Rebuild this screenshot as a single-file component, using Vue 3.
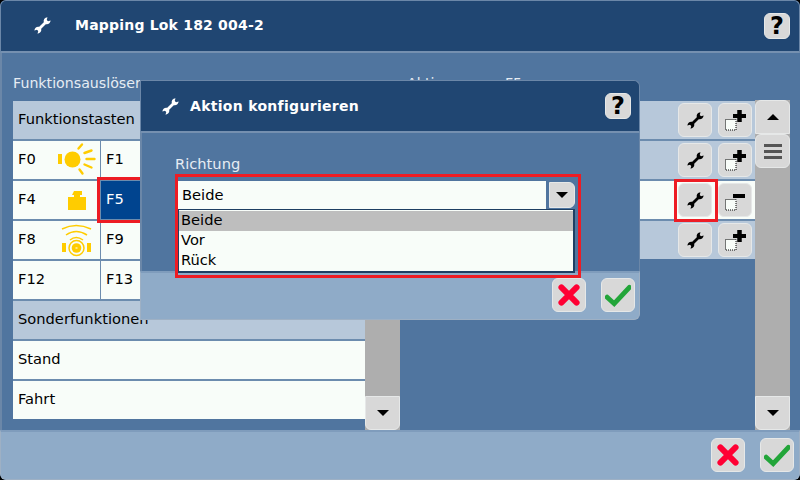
<template>
  <div class="window">
    <header class="head main-head">
      <svg class="head-wrench" viewBox="0 0 24 24"><use href="#wrench" /></svg>
      <h1>Mapping Lok 182 004-2</h1>
      <button class="btn help">?</button>
    </header>

    <main class="body">
      <section class="left">
        <div class="caption">Funktionsauslöser</div>
        <div class="table">
          <div class="row group">Funktionstasten</div>
          <div v-for="(row, i) in keys" :key="i" class="row keys">
            <div v-for="k in row" :key="k.name" class="key" :class="{ active: k.name === 'F5' }">
              <span>{{ k.name }}</span>
              <svg v-if="k.icon === 'light'" class="fn-icon" viewBox="0 0 40 36">
                <rect x="2" y="12" width="4" height="10" fill="#fc0" />
                <circle cx="16.500" cy="17.500" r="8" fill="#fc0" />
                <path class="rays" d="M22.500 6.500L26 2.500M28.500 11L35.500 8.500M30.500 17H38.500M28.500 22.500L35.500 25.500M23.500 27.500L26.500 31.500" />
              </svg>
              <svg v-if="k.icon === 'weight'" class="fn-icon" viewBox="0 0 40 36">
                <path d="M18 9h8v4h-2v2h6v13H12V15h6v-2h-2z" fill="#fc0" />
              </svg>
              <svg v-if="k.icon === 'sound'" class="fn-icon" viewBox="0 0 40 36">
                <g fill="none" stroke="#fc0" stroke-width="1.500">
                  <path d="M6 7Q20 0 35 7M10 13Q20 6 31 13M14 18Q20 13 27 18" />
                  <circle cx="20.500" cy="26" r="7.500" />
                </g>
                <circle cx="20.500" cy="26" r="4.800" fill="#fc0" />
                <rect x="19.500" y="25.500" width="2" height="1" fill="#fff" />
                <path d="M6 21h4v9H6zM31 21h4v9h-4z" fill="#fc0" />
              </svg>
            </div>
            <div class="key rest"></div>
          </div>
          <div class="row group">Sonderfunktionen</div>
          <div class="row plain">Stand</div>
          <div class="row plain">Fahrt</div>
        </div>
        <div class="scroll narrow">
          <button class="btn arrow end"><i class="tri down"></i></button>
        </div>
      </section>

      <section class="right">
        <div class="caption">Aktionen von F5</div>
        <div class="actions">
          <div v-for="(a, i) in actions" :key="i" class="row action" :class="{ on: a === 'minus' }">
            <span class="tool-wrap" :class="{ marked: a === 'minus' }">
              <button class="btn tool">
                <svg class="small-wrench" viewBox="0 0 24 24"><use href="#wrench" /></svg>
              </button>
            </span>
            <button class="btn tool">
              <svg viewBox="0 0 24 24">
                <rect x="2.500" y="11.500" width="10.500" height="10.500" fill="#f8fdf9" stroke="#000" stroke-dasharray="1 1" />
                <path v-if="a === 'plus'" d="M14.250 2h4.500v4H23v4h-4.250v4h-4.500v-4H10V6h4.250z" />
                <path v-else d="M10 6h12v4H10z" />
              </svg>
            </button>
          </div>
        </div>
        <div class="scroll">
          <button class="btn arrow top"><i class="tri up"></i></button>
          <button class="btn arrow grip"><i></i><i></i><i></i></button>
          <button class="btn arrow end"><i class="tri down"></i></button>
        </div>
      </section>
    </main>

    <footer class="foot main-foot">
      <button class="btn big">
        <svg viewBox="0 0 24 24"><path d="M5 5L19 19M19 5L5 19" class="x" /></svg>
      </button>
      <button class="btn big">
        <svg viewBox="0 0 24 24"><path d="M2 14L8.500 20L22.500 5" class="ok" /></svg>
      </button>
    </footer>

    <div class="f5-mark"></div>

    <div class="dialog">
      <header class="head dlg-head">
        <svg class="head-wrench" viewBox="0 0 24 24"><use href="#wrench" /></svg>
        <h2>Aktion konfigurieren</h2>
        <button class="btn help">?</button>
      </header>
      <div class="dlg-body">
        <label>Richtung</label>
        <div class="select-mark">
          <div class="select">
            <div class="value">Beide</div>
            <button class="btn drop"><i class="tri down"></i></button>
          </div>
          <ul class="list">
            <li v-for="o in options" :key="o" :class="{ sel: o === 'Beide' }">{{ o }}</li>
          </ul>
        </div>
      </div>
      <footer class="foot dlg-foot">
        <button class="btn big">
          <svg viewBox="0 0 24 24"><path d="M5 5L19 19M19 5L5 19" class="x" /></svg>
        </button>
        <button class="btn big">
          <svg viewBox="0 0 24 24"><path d="M2 14L8.500 20L22.500 5" class="ok" /></svg>
        </button>
      </footer>
    </div>

    <svg class="defs" width="0" height="0">
      <defs>
        <path
          id="wrench"
          d="M13.800 7.400C13 3.800 15.200 1 19 .5L18 4.200L19.800 6L23.500 5C23 8.800 20.200 11 16.600 10.200L10.200 16.600C11 20.200 8.800 23 5 23.500L6 19.800L4.200 18L.5 19C1 15.200 3.800 13 7.400 13.800Z"
        />
      </defs>
    </svg>
  </div>
</template>

<script setup>
const keys = [
  [{ name: "F0", icon: "light" }, { name: "F1" }],
  [{ name: "F4", icon: "weight" }, { name: "F5" }],
  [{ name: "F8", icon: "sound" }, { name: "F9" }],
  [{ name: "F12" }, { name: "F13" }],
];
const actions = ["plus", "plus", "minus", "plus"];
const options = ["Beide", "Vor", "Rück"];
</script>

<style>
html,
body {
  margin: 0;
  background: #000;
}
</style>

<style scoped>
.window {
  position: relative;
  width: 800px;
  height: 480px;
  display: flex;
  flex-direction: column;
  overflow: hidden;
  border-radius: 6px;
  font-family: "DejaVu Sans", sans-serif;
  font-size: 14.67px;
  color: #000;
  background: #50759f;
}

.defs {
  position: absolute;
}

.btn {
  display: flex;
  align-items: center;
  justify-content: center;
  padding: 0;
  box-sizing: border-box;
  background: #d8d8d8;
  border: 1px solid #e6e8e8;
  border-radius: 6px;
}

.head {
  display: flex;
  flex: none;
  align-items: center;
  box-sizing: border-box;
  color: #fff;
  background: #204672;
  border: 1px solid #6b87a8;
  border-bottom: 2px solid #7590b0;
}

.main-head {
  height: 53px;
  padding: 0 9px 1px 33px;
  border-radius: 6px 6px 0 0;
}

.head-wrench {
  width: 17px;
  height: 17px;
  fill: #fff;
  flex: none;
}

h1,
h2 {
  flex: 1;
  margin: 0 0 1px;
  font-size: 14px;
  font-weight: bold;
  letter-spacing: 0.2px;
}

h1 {
  margin-left: 24px;
}

h2 {
  margin-left: 11px;
  letter-spacing: 0.3px;
}

.help {
  width: 26px;
  height: 26px;
  font-size: 24px;
  font-weight: bold;
  line-height: 1;
  color: #000;
  font-family: "DejaVu Sans", sans-serif;
}

.body {
  flex: 1;
  display: flex;
  padding: 0 10px 0 13px;
  border-left: 2px solid #6b87a8;
  box-sizing: border-box;
  min-height: 0;
}

.left,
.right {
  position: relative;
  display: flex;
}

.left {
  width: 387px;
  margin-left: -2px;
}

.right {
  flex: 1;
}

.caption {
  position: absolute;
  top: 22px;
  left: 0;
  color: #e6ecf3;
  font-size: 14.2px;
  white-space: nowrap;
}

.right .caption {
  left: 7px;
}

.table {
  width: 352px;
  margin-top: 48px;
}

.row {
  box-sizing: border-box;
  height: 40px;
  display: flex;
  align-items: center;
  border-bottom: 2px solid #6c8cae;
}

.row:last-child {
  border-bottom-color: #50759f;
}

.group {
  background: #b7c8da;
  padding: 0 0 3px 5px;
}

.plain {
  background: #f8fdf9;
  padding: 0 0 3px 5px;
}

.keys {
  align-items: stretch;
  background: #f8fdf9;
}

.key {
  box-sizing: border-box;
  width: 88px;
  display: flex;
  align-items: center;
  justify-content: space-between;
  padding: 0 6px 0 5px;
  border-right: 1px solid #6c8cae;
}

.key span {
  margin-bottom: 3px;
}

.key.rest {
  flex: 1;
  border-right: none;
}

.key.active {
  background: #00448f;
  color: #fff;
}

.fn-icon {
  width: 40px;
  height: 36px;
  margin-right: -2px;
}

.rays {
  fill: none;
  stroke: #fc0;
  stroke-width: 2.400;
  stroke-linecap: round;
}

.scroll {
  width: 35px;
  margin-top: 47px;
  display: flex;
  flex-direction: column;
  background: #aeaeae;
}

.scroll.narrow {
  margin-top: 48px;
}

.arrow {
  width: 35px;
  height: 34px;
  flex: none;
}

.top {
  border-radius: 6px 6px 0 0;
}

.grip {
  flex-direction: column;
  gap: 3px;
  border-radius: 6px;
}

.grip i {
  display: block;
  width: 18px;
  height: 3px;
  background: #555;
}

.end {
  margin-top: auto;
  border-radius: 0 0 6px 6px;
}

.tri {
  display: block;
  width: 0;
  height: 0;
  border-left: 6px solid transparent;
  border-right: 6px solid transparent;
}

.tri.down {
  border-top: 6px solid #000;
}

.tri.up {
  border-bottom: 6px solid #000;
}

.actions {
  width: 355px;
  margin-top: 48px;
}

.action {
  justify-content: flex-end;
  gap: 6px;
  padding-right: 3px;
  background: #b7c8da;
}

.action.on {
  background: #f8fdf9;
}

.tool {
  width: 34px;
  height: 34px;
}

.tool svg {
  width: 24px;
  height: 24px;
}

.tool .small-wrench {
  width: 17px;
  height: 17px;
}

.tool-wrap {
  position: relative;
  display: flex;
}

.tool-wrap.marked::after {
  content: "";
  position: absolute;
  inset: -4px -6px -5px -4px;
  border: 3px solid #ed1c24;
}

.foot {
  display: flex;
  flex: none;
  justify-content: flex-end;
  gap: 15px;
  box-sizing: border-box;
  background: #8fabc8;
  border: 1px solid #9eb0c4;
  border-top: 2px solid #7f9cbc;
}

.main-foot {
  height: 50px;
  padding: 6px 5px 0 0;
  border-radius: 0 0 6px 6px;
  align-items: flex-start;
}

.big {
  width: 34px;
  height: 34px;
}

.big svg {
  width: 26px;
  height: 26px;
  fill: none;
  stroke-linecap: round;
}

.x {
  stroke: #ff0033;
  stroke-width: 5.500;
}

.ok {
  stroke: #22a539;
  stroke-width: 4.500;
}

.dialog {
  position: absolute;
  left: 140px;
  top: 80px;
  width: 500px;
  height: 240px;
  display: flex;
  flex-direction: column;
  background: #50759f;
  border-radius: 0 6px 6px 0;
}

.dlg-head {
  height: 53px;
  padding: 0 8px 0 21px;
  border-radius: 0 6px 0 0;
}

.dlg-body {
  flex: 1;
  min-height: 0;
  padding: 22px 0 0 35px;
  border-right: 1px solid #6b87a8;
  border-left: 2px solid #6b87a8;
}

.dlg-body label {
  display: block;
  color: #e6ecf3;
  line-height: 18px;
  margin-left: -2px;
}

.select-mark {
  position: relative;
  z-index: 1;
  box-sizing: content-box;
  width: 397px;
  height: 93px;
  margin: 1px 0 0 -2px;
  padding: 4px 3px 1px 0;
  border: 3px solid #ed1c24;
}

.select {
  display: flex;
  height: 28px;
  gap: 3px;
}

.value {
  flex: 1;
  background: #f8fdf9;
  padding-left: 4px;
  line-height: 27px;
}

.drop {
  width: 26px;
  height: 26px;
  margin-top: 1px;
  border-radius: 0 6px 6px 0;
}

.list {
  list-style: none;
  margin: 0;
  padding: 1px 0 0;
  box-sizing: border-box;
  height: 64px;
  background: #f8fdf9;
  border: 1px solid #1e3f63;
  border-bottom-width: 2px;
  border-right-width: 2px;
}

.list li {
  height: 20px;
  line-height: 18px;
  padding-left: 2px;
}

.list li.sel {
  background: #bebebe;
}

.dlg-foot {
  height: 49px;
  padding: 5px 4px 0 0;
  border-radius: 0 0 6px 0;
  align-items: flex-start;
}

.f5-mark {
  position: absolute;
  left: 97px;
  top: 177px;
  width: 40px;
  height: 40px;
  border: 3px solid #ed1c24;
}
</style>
